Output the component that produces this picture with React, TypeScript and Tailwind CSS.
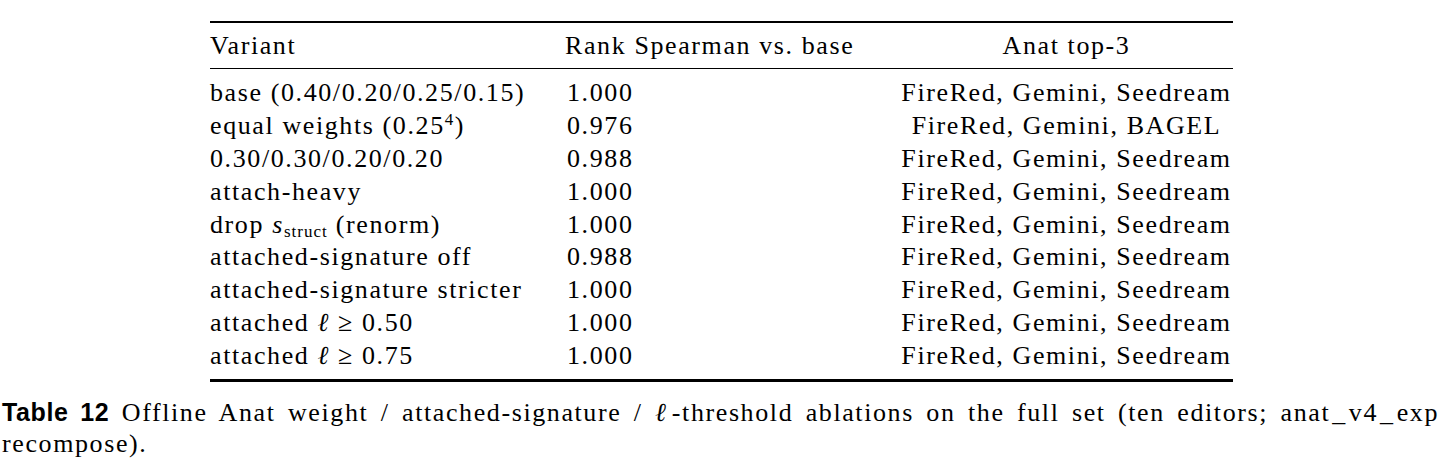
import { ReactElement, ReactNode } from 'react'

type Row = {
  variant: ReactNode
  rank: string
  top: string
}

const Ell = (): ReactElement => <span className="italic">ℓ</span>

const rows: Row[] = [
  { variant: 'base (0.40/0.20/0.25/0.15)', rank: '1.000', top: 'FireRed, Gemini, Seedream' },
  {
    variant: (
      <>
        equal weights (0.25<sup className="text-[17px] relative -top-[9px]">4</sup>)
      </>
    ),
    rank: '0.976',
    top: 'FireRed, Gemini, BAGEL',
  },
  { variant: '0.30/0.30/0.20/0.20', rank: '0.988', top: 'FireRed, Gemini, Seedream' },
  { variant: 'attach-heavy', rank: '1.000', top: 'FireRed, Gemini, Seedream' },
  {
    variant: (
      <>
        drop <span className="italic">s</span>
        <sub className="text-[17px] relative top-[4px] tracking-[1px]">struct</sub> (renorm)
      </>
    ),
    rank: '1.000',
    top: 'FireRed, Gemini, Seedream',
  },
  { variant: 'attached-signature off', rank: '0.988', top: 'FireRed, Gemini, Seedream' },
  { variant: 'attached-signature stricter', rank: '1.000', top: 'FireRed, Gemini, Seedream' },
  {
    variant: (
      <>
        attached <Ell /> ≥ 0.50
      </>
    ),
    rank: '1.000',
    top: 'FireRed, Gemini, Seedream',
  },
  {
    variant: (
      <>
        attached <Ell /> ≥ 0.75
      </>
    ),
    rank: '1.000',
    top: 'FireRed, Gemini, Seedream',
  },
]

const App = (): ReactElement => {
  return (
    <div className="w-[1443px] h-[475px] overflow-hidden bg-white text-black font-['Liberation_Serif',serif] text-[26px] tracking-[1.6px]">
      <div className="pt-[21px] pl-[210px]">
        <div className="w-[1023px] border-t-2 border-b-[3px] border-black">
          {/* header */}
          <div className="grid grid-cols-[355px_335px_333px] h-[46px] items-center whitespace-nowrap border-b-[1.5px] border-black">
            <div>Variant</div>
            <div>Rank Spearman vs. base</div>
            <div className="text-center">Anat top-3</div>
          </div>

          <div className="pt-[8px] pb-[7px]">
            {rows.map((row, i) => (
              <div
                key={i}
                className="grid grid-cols-[355px_335px_333px] h-[32.8px] items-center leading-none whitespace-nowrap"
              >
                <div>{row.variant}</div>
                <div className="pl-[2px]">{row.rank}</div>
                <div className="text-center">{row.top}</div>
              </div>
            ))}
          </div>
        </div>
      </div>

      {/* caption, first line is justified like LaTeX */}
      <div className="mt-[15px] pl-[2px] leading-[31px] whitespace-nowrap">
        <div className="w-[1437px] whitespace-normal text-justify [text-align-last:justify]">
          <span className="font-['Liberation_Sans',sans-serif] font-bold tracking-[0.6px] text-[25px]">Table 12</span>{' '}
          Offline Anat weight / attached-signature / <Ell />-threshold ablations on the full set (ten editors;
          anat<span className="mx-[2px]">_</span>v4<span className="mx-[2px]">_</span>exp
        </div>
        <div>recompose).</div>
      </div>
    </div>
  )
}

export default App
